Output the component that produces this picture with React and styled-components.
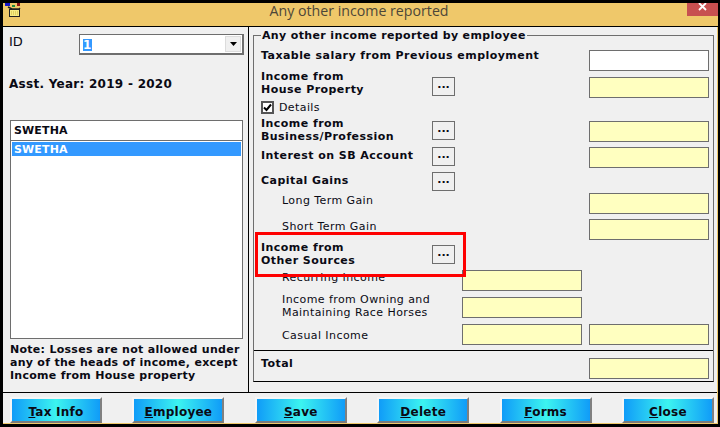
import React from "react";
import styled, { createGlobalStyle } from "styled-components";

const GlobalStyle = createGlobalStyle`
  html, body {
    margin: 0;
    padding: 0;
    background: #000;
  }
  * {
    box-sizing: border-box;
  }
`;

const FONT = `"DejaVu Sans", Verdana, sans-serif`;

const BUTTONS = [
  { key: "T", rest: "ax Info" },
  { key: "E", rest: "mployee" },
  { key: "S", rest: "ave" },
  { key: "D", rest: "elete" },
  { key: "F", rest: "orms" },
  { key: "C", rest: "lose" },
];

const App = () => {
  return (
    <>
      <GlobalStyle />
      <Window>
        <TitleBar>
          <AppIcon />
          <Title>Any other income reported</Title>
          <CloseX>
            <svg width="10" height="10" viewBox="0 0 10 10">
              <path d="M1 0 L8 7 M8 0 L1 7" stroke="#fff" strokeWidth="1.8" />
            </svg>
          </CloseX>
        </TitleBar>

        <Body>
          <LeftPanel>
            <IdRow>
              <IdLabel>ID</IdLabel>
              <Combo>
                <ComboValue>1</ComboValue>
                <ComboArrow>
                  <svg width="7" height="4" viewBox="0 0 7 4">
                    <path d="M0 0 H7 L3.5 4 Z" fill="#000" />
                  </svg>
                </ComboArrow>
              </Combo>
            </IdRow>
            <YearLabel>Asst. Year: 2019 - 2020</YearLabel>
            <List>
              <ListHeader>SWETHA</ListHeader>
              <ListItem>SWETHA</ListItem>
            </List>
            <Note>
              Note: Losses are not allowed under
              <br />
              any of the heads of income, except
              <br />
              Income from House property
            </Note>
          </LeftPanel>

          <RightPanel>
            <Fieldset>
              <Legend>Any other income reported by employee</Legend>
              <Rows>
                <Row $top={2}>
                  <Bold $span={4} $shift={-2}>
                    Taxable salary from Previous employment
                  </Bold>
                  <Field $col={5} $white />
                </Row>
                <Row $top={6}>
                  <Bold $shift={-8}>
                    Income from
                    <br />
                    House Property
                  </Bold>
                  <Browse>...</Browse>
                  <Field $col={5} />
                </Row>
                <DetailsRow>
                  <CheckBox>
                    <svg width="9" height="9" viewBox="0 0 9 9">
                      <path d="M1 4.5 L3.5 7 L8 1.5" fill="none" stroke="#000" strokeWidth="2" />
                    </svg>
                  </CheckBox>
                  <Plain>Details</Plain>
                </DetailsRow>
                <Row $top={7}>
                  <Bold $shift={-5}>
                    Income from
                    <br />
                    Business/Profession
                  </Bold>
                  <Browse>...</Browse>
                  <Field $col={5} />
                </Row>
                <Row $top={5}>
                  <Bold $shift={1}>Interest on SB Account</Bold>
                  <Browse>...</Browse>
                  <Field $col={5} />
                </Row>
                <Row $top={4}>
                  <Bold $shift={1}>Capital Gains</Bold>
                  <Browse>...</Browse>
                </Row>
                <Row $top={0}>
                  <Sub>Long Term Gain</Sub>
                  <Field $col={5} />
                </Row>
                <Row $top={5}>
                  <Sub>Short Term Gain</Sub>
                  <Field $col={5} />
                </Row>
                <Row $top={5}>
                  <Bold $shift={-5}>
                    Income from
                    <br />
                    Other Sources
                  </Bold>
                  <Browse>...</Browse>
                </Row>
                <Row $top={4}>
                  <Sub>Recurring Income</Sub>
                  <Field $col={3} />
                </Row>
                <Row $top={6}>
                  <Sub $span={2} $shift={-5}>
                    Income from Owning and
                    <br />
                    Maintaining Race Horses
                  </Sub>
                  <Field $col={3} />
                </Row>
                <Row $top={6}>
                  <Sub $shift={4}>Casual Income</Sub>
                  <Field $col={3} />
                  <Field $col={5} />
                </Row>
              </Rows>
              <TotalRow>
                <Bold $span={4} $shift={-2}>
                  Total
                </Bold>
                <Field $col={5} />
              </TotalRow>
              <Highlight />
            </Fieldset>
          </RightPanel>
        </Body>

        <ButtonBar>
          {BUTTONS.map((b) => (
            <ActionButton key={b.key}>
              <u>{b.key}</u>
              {b.rest}
            </ActionButton>
          ))}
        </ButtonBar>
      </Window>
    </>
  );
};

// little box logo in the title bar
const AppIcon = () => (
  <IconWrap>
    <svg width="16" height="14" viewBox="0 0 16 14">
      <rect x="0" y="0" width="5" height="3" fill="#1414c8" />
      <rect x="12" y="0" width="3" height="3" fill="#8c1414" />
      <path d="M7 2 H10 V4 H7 Z" fill="#1e8c3c" />
      <path d="M3 4 L7 6 H14 L15 5" fill="none" stroke="#222" strokeWidth="1.4" />
      <rect x="4.5" y="6.5" width="10" height="7" fill="#f8ec84" stroke="#222" strokeWidth="1" />
      <path d="M6 9 H13 M6 11 H13" stroke="#c8b43c" strokeWidth="1" strokeDasharray="1 1" />
    </svg>
  </IconWrap>
);

export default App;

const Window = styled.div`
  width: 720px;
  height: 427px;
  border-top: 3px solid #000;
  border-left: 3px solid #000;
  border-bottom: 3px solid #000;
  border-right: 2px solid #000;
  background: #efc86a;
  display: flex;
  flex-direction: column;
  overflow: hidden;
  font-family: ${FONT};
  color: #0a0a14;
`;

const TitleBar = styled.div`
  height: 24px;
  flex: none;
  position: relative;
  display: flex;
  justify-content: center;
  border-bottom: 1px solid #000;
  background: #efc86a;
`;

const IconWrap = styled.div`
  position: absolute;
  left: 2px;
  top: 0;
  line-height: 0;
`;

const Title = styled.div`
  font-family: "Open Sans", "DejaVu Sans", sans-serif;
  font-size: 14.2px;
  line-height: 16px;
  color: #4c4638;
  margin-right: 3px;
`;

const CloseX = styled.div`
  position: absolute;
  right: 0;
  top: 0;
  width: 31px;
  height: 13px;
  background: #c75050;
  display: flex;
  justify-content: center;
  line-height: 0;
`;

const Body = styled.div`
  width: 714px;
  height: 366px;
  flex: none;
  display: flex;
  background: #f0f0f0;
  border-bottom: 1px solid #000;
`;

const LeftPanel = styled.div`
  width: 246px;
  flex: none;
  border-right: 1px solid #000;
  display: flex;
  flex-direction: column;
  padding: 7px 4px 0 7px;
`;

const IdRow = styled.div`
  display: flex;
  justify-content: space-between;
  height: 21px;
`;

const IdLabel = styled.div`
  font-size: 13px;
  line-height: 14px;
  margin-left: -1px;
  margin-top: 1px;
`;

const Combo = styled.div`
  width: 165px;
  height: 21px;
  background: #fff;
  border: 1px solid #6e6e6e;
  border-right-width: 2px;
  border-bottom-width: 2px;
  display: flex;
  justify-content: space-between;
  padding: 1px;
`;

const ComboValue = styled.span`
  display: block;
  width: 9px;
  height: 12px;
  margin: 3px 0 0 2px;
  background: #3399ff;
  color: #fff;
  font-size: 12px;
  font-weight: bold;
  line-height: 12px;
`;

const ComboArrow = styled.span`
  width: 16px;
  height: 16px;
  background: #f0f0f0;
  border: 1px solid #dcdcdc;
  display: flex;
  align-items: center;
  justify-content: center;
`;

const YearLabel = styled.div`
  margin-top: 22px;
  margin-left: -1px;
  font-size: 12px;
  font-weight: bold;
  line-height: 14px;
  letter-spacing: 0.27px;
  white-space: nowrap;
`;

const List = styled.div`
  margin-top: 29px;
  width: 233px;
  height: 219px;
  flex: none;
  background: #fff;
  border: 1px solid #6e6e6e;
`;

const ListHeader = styled.div`
  height: 20px;
  border-bottom: 1px solid #6e6e6e;
  font-size: 11px;
  font-weight: bold;
  line-height: 20px;
  padding-left: 3px;
  letter-spacing: 0.15px;
`;

const ListItem = styled.div`
  margin: 1px 1px 0;
  height: 14px;
  background: #3399ff;
  color: #fff;
  font-size: 11px;
  font-weight: bold;
  line-height: 15px;
  padding-left: 2px;
  letter-spacing: 0.15px;
`;

const Note = styled.div`
  margin-top: 4px;
  font-size: 11px;
  font-weight: bold;
  line-height: 13px;
  white-space: nowrap;
  letter-spacing: 0.28px;
`;

const RightPanel = styled.div`
  flex: 1;
  padding: 8px 3px 0 4px;
`;

const Fieldset = styled.div`
  position: relative;
  width: 461px;
  height: 347px;
  border: 1px solid #6e6e6e;
  border-bottom-color: #000;
  padding-top: 12px;
`;

const Legend = styled.div`
  position: absolute;
  left: 7px;
  top: -7px;
  padding: 0 1px;
  background: #f0f0f0;
  font-size: 11px;
  font-weight: bold;
  line-height: 14px;
  letter-spacing: 0.36px;
  white-space: nowrap;
`;

const Rows = styled.div`
  height: 301px;
  padding-left: 7px;
  border-bottom: 1px solid #000;
`;

const Row = styled.div`
  display: grid;
  grid-template-columns: 171px 30px 120px 7px 120px;
  height: 21px;
  margin-top: ${(p) => p.$top}px;
  align-items: start;
`;

const DetailsRow = styled.div`
  display: flex;
  align-items: center;
  gap: 5px;
  height: 14px;
  margin-top: 2px;
`;

const CheckBox = styled.span`
  width: 13px;
  height: 13px;
  border: 2px solid #555;
  background: #fff;
  display: flex;
  align-items: center;
  justify-content: center;
`;

const Plain = styled.span`
  font-size: 11px;
  line-height: 13px;
  letter-spacing: 0.4px;
`;

const Bold = styled.div`
  grid-column: span ${(p) => p.$span || 1};
  margin-top: ${(p) => p.$shift || 0}px;
  font-size: 11px;
  font-weight: bold;
  line-height: 13px;
  letter-spacing: 0.45px;
  white-space: nowrap;
  padding-top: 1px;
`;

const Sub = styled.div`
  grid-column: span ${(p) => p.$span || 1};
  margin-top: ${(p) => p.$shift || 0}px;
  padding: 1px 0 0 21px;
  font-size: 11px;
  line-height: 13px;
  letter-spacing: 0.42px;
  white-space: nowrap;
`;

const Browse = styled.div`
  grid-column: 2;
  width: 23px;
  height: 19px;
  background: #f0f0f0;
  border: 1px solid #6e6e6e;
  font-size: 11px;
  font-weight: bold;
  line-height: 14px;
  text-align: center;
`;

const Field = styled.div`
  grid-column: ${(p) => p.$col};
  grid-row: 1;
  width: 120px;
  height: 21px;
  background: ${(p) => (p.$white ? "#fff" : "#ffffc0")};
  border: 1px solid #6e6e6e;
`;

const TotalRow = styled(Row)`
  padding-left: 7px;
  margin-top: 7px;
`;

// red marker drawn over the form in the screenshot
const Highlight = styled.div`
  position: absolute;
  left: 1px;
  top: 196px;
  width: 211px;
  height: 45px;
  border: 3px solid #fe0000;
  pointer-events: none;
`;

const ButtonBar = styled.div`
  flex: none;
  height: 30px;
  width: 714px;
  background: #f0f0f0;
  display: flex;
  justify-content: space-between;
  padding: 4px 3px 0 7px;
`;

const ActionButton = styled.div`
  width: 92px;
  height: 26px;
  border: 2px solid;
  border-color: #f6f6f6 #808080 #7a7a7a #f6f6f6;
  background: linear-gradient(90deg, #109cf8 0%, #3cf4f0 50%, #109cf8 100%);
  font-size: 12px;
  font-weight: bold;
  line-height: 27px;
  letter-spacing: 0.25px;
  text-align: center;
  color: #0a0a14;
`;
